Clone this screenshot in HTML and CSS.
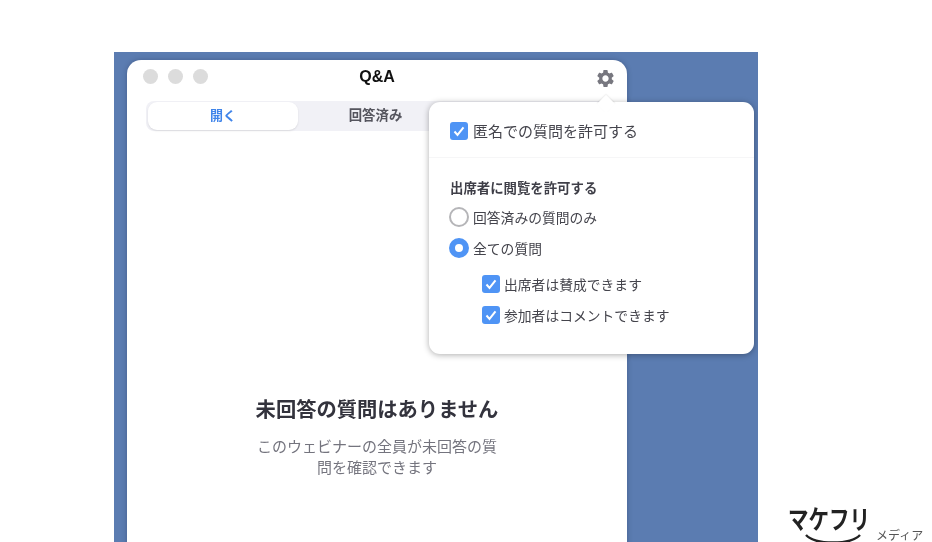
FILE: index.html
```html
<!DOCTYPE html>
<html lang="ja">
<head>
  <meta charset="UTF-8" />
  <title>Q&amp;A</title>
  <link rel="stylesheet" href="styles.css">
</head>
<body>
  <div class="panel">
    <div class="window">
      <div class="titlebar">
        <div class="lights"><span></span><span></span><span></span></div>
        <div class="title">Q&amp;A</div>
        <svg class="gear" viewBox="0 0 24 24"><path d="M19.14 12.94c.04-.3.06-.61.06-.94 0-.32-.02-.64-.07-.94l2.03-1.58a.49.49 0 0 0 .12-.61l-1.92-3.32a.488.488 0 0 0-.59-.22l-2.39.96c-.5-.38-1.03-.7-1.62-.94l-.36-2.54a.484.484 0 0 0-.48-.41h-3.84c-.24 0-.43.17-.47.41l-.36 2.54c-.59.24-1.13.57-1.62.94l-2.39-.96c-.22-.08-.47 0-.59.22L2.74 8.87c-.12.21-.08.47.12.61l2.03 1.58c-.05.3-.09.63-.09.94s.02.64.07.94l-2.03 1.58a.49.49 0 0 0-.12.61l1.92 3.32c.12.22.37.29.59.22l2.39-.96c.5.38 1.03.7 1.62.94l.36 2.54c.05.24.24.41.48.41h3.84c.24 0 .44-.17.47-.41l.36-2.54c.59-.24 1.13-.56 1.62-.94l2.39.96c.22.08.47 0 .59-.22l1.92-3.32c.12-.22.07-.47-.12-.61l-2.01-1.58zM12 15.6c-1.98 0-3.6-1.62-3.6-3.6s1.62-3.6 3.6-3.6 3.6 1.62 3.6 3.6-1.62 3.6-3.6 3.6z"/></svg>
      </div>

      <div class="tabs">
        <div class="tab active">開く</div>
        <div class="tab done">回答済み</div>
      </div>

      <div class="empty">
        <h2>未回答の質問はありません</h2>
        <p>このウェビナーの全員が未回答の質<br>問を確認できます</p>
      </div>

      <!-- 設定ポップオーバー -->
      <div class="popover">
        <div class="arrow"></div>
        <div class="pop-top">
          <label class="row">
            <span class="check"><svg viewBox="0 0 18 18"><path d="M4.5 9.5l3 3.4 6-7.6"/></svg></span>
            <span class="big">匿名での質問を許可する</span>
          </label>
        </div>
        <div class="pop-bottom">
          <div class="pop-head">出席者に閲覧を許可する</div>
          <div class="row radio-row"><span class="radio"></span>回答済みの質問のみ</div>
          <div class="row radio-row"><span class="radio on"></span>全ての質問</div>
          <div class="subs">
            <div class="row sub-row">
              <span class="check"><svg viewBox="0 0 18 18"><path d="M4.5 9.5l3 3.4 6-7.6"/></svg></span>出席者は賛成できます
            </div>
            <div class="row sub-row">
              <span class="check"><svg viewBox="0 0 18 18"><path d="M4.5 9.5l3 3.4 6-7.6"/></svg></span>参加者はコメントできます
            </div>
          </div>
        </div>
      </div>
    </div>
  </div>

  <div class="logo">
    <div class="logo-name">マケフリ</div>
    <div class="logo-sub">メディア</div>
    <svg class="smile" viewBox="0 0 56 10"><path d="M1 1c9 10 45 10 54 0"/></svg>
  </div>
</body>
</html>
```

FILE: styles.css
```css
html, body {
  margin: 0;
  padding: 0;
  height: 542px;
  overflow: hidden;
  background: #fff;
  font-family: "Noto Sans CJK JP", "Noto Sans", sans-serif;
  color: #3a3a44;
}

body {
  display: flex;
  padding-left: 114px;
  box-sizing: border-box;
}

.panel {
  width: 644px;
  height: 490px;
  margin-top: 52px;
  padding: 8px 0 0 13px;
  box-sizing: border-box;
  background: #5b7cb1;
  overflow: hidden;
  flex-shrink: 0;
}

.window {
  position: relative;
  width: 500px;
  height: 520px;
  background: #fff;
  border-radius: 14px 14px 0 0;
  box-shadow: 0 0 5px rgba(30, 40, 70, 0.35);
  filter: blur(0.45px);
}

/* タイトルバー */
.titlebar {
  display: flex;
  align-items: center;
  justify-content: space-between;
  height: 34px;
  padding: 0 11px 0 16px;
  position: relative;
}

.lights {
  display: flex;
  gap: 10px;
  margin-bottom: 2px;
}
.lights span {
  width: 15px;
  height: 15px;
  border-radius: 50%;
  background: #dcdcdc;
}

.title {
  position: absolute;
  left: 0;
  right: 0;
  text-align: center;
  font-size: 16px;
  font-weight: 700;
  color: #111;
  font-family: "Liberation Sans", sans-serif;
}

.gear {
  width: 21px;
  height: 21px;
  fill: #77777f;
  margin-top: 3px;
}

/* タブ */
.tabs {
  display: flex;
  margin: 7px 19px 0 19px;
  height: 30px;
  padding: 1px 2px;
  box-sizing: border-box;
  background: #f1f1f6;
  border-radius: 8px;
}
.tab {
  width: 150px;
  padding-bottom: 4px;
  box-sizing: border-box;
  display: flex;
  align-items: center;
  justify-content: center;
  font-size: 13px;
  font-weight: 700;
  color: #55555e;
}
.tab.done {
  padding-left: 5px;
  font-size: 13.4px;
}
.tab.active {
  background: #fff;
  border-radius: 9px;
  color: #3f84ea;
  box-shadow: 0 1px 2px rgba(0, 0, 0, 0.1);
}

/* 空の状態 */
.empty {
  padding-top: 262px;
  text-align: center;
}
.empty h2 {
  margin: 0;
  font-size: 20.3px;
  line-height: 30px;
  font-weight: 700;
  color: #33333d;
}
.empty p {
  margin: 12px 0 0;
  font-size: 15px;
  line-height: 21px;
  color: #74747e;
}

/* ポップオーバー */
.popover {
  position: absolute;
  left: 302px;
  top: 42px;
  width: 325px;
  height: 252px;
  background: #fff;
  border-radius: 11px;
  box-shadow: 0 1px 6px rgba(0, 0, 0, 0.32);
  font-size: 13.8px;
  color: #44444c;
}

.arrow {
  position: absolute;
  left: 168px;
  top: -7px;
  width: 18px;
  height: 18px;
  background: #fff;
  transform: rotate(45deg) scale(0.72);
  box-shadow: -1px -1px 2px rgba(0, 0, 0, 0.08);
}

.pop-top {
  position: relative;
  height: 53px;
  padding: 2px 0 0 21px;
  display: flex;
  align-items: center;
  border-bottom: 1px solid #f6f6f7;
}

.pop-bottom {
  padding: 19px 0 0 20px;
}

.pop-head {
  font-size: 13.4px;
  line-height: 20px;
  font-weight: 700;
  margin: 0 0 4px 1px;
  color: #3f3f48;
}

.row {
  display: flex;
  align-items: center;
}

.big {
  font-size: 15px;
  margin-left: 1px;
}

.check {
  width: 18px;
  height: 18px;
  flex-shrink: 0;
  margin-right: 4px;
  border-radius: 3px;
  background: #4f94f5;
}
.check svg {
  display: block;
  fill: none;
  stroke: #fff;
  stroke-width: 2;
}

.radio-row {
  height: 31px;
}

.radio {
  width: 20px;
  height: 20px;
  margin-right: 4px;
  box-sizing: border-box;
  border-radius: 50%;
  border: 2px solid #b5b5b8;
  background: #fff;
}
.radio.on {
  border: 6px solid #4f94f5;
}

.subs {
  padding: 5px 0 0 33px;
}
.sub-row {
  height: 31px;
}

/* ロゴ */
.logo {
  position: relative;
  width: 140px;
  margin-left: 30px;
  align-self: flex-end;
  height: 46px;
  filter: blur(0.3px);
}
.logo-name {
  position: absolute;
  left: 0;
  top: 4px;
  font-size: 26px;
  line-height: 36px;
  font-weight: 700;
  color: #222;
  white-space: nowrap;
  transform: scaleX(0.79);
  transform-origin: left center;
}
.logo-sub {
  position: absolute;
  left: 88px;
  bottom: -2px;
  font-size: 12px;
  line-height: 18px;
  color: #555;
  white-space: nowrap;
}
.smile {
  position: absolute;
  left: 17px;
  top: 38px;
  width: 56px;
  height: 10px;
  fill: none;
  stroke: #222;
  stroke-width: 2.4;
}
```
